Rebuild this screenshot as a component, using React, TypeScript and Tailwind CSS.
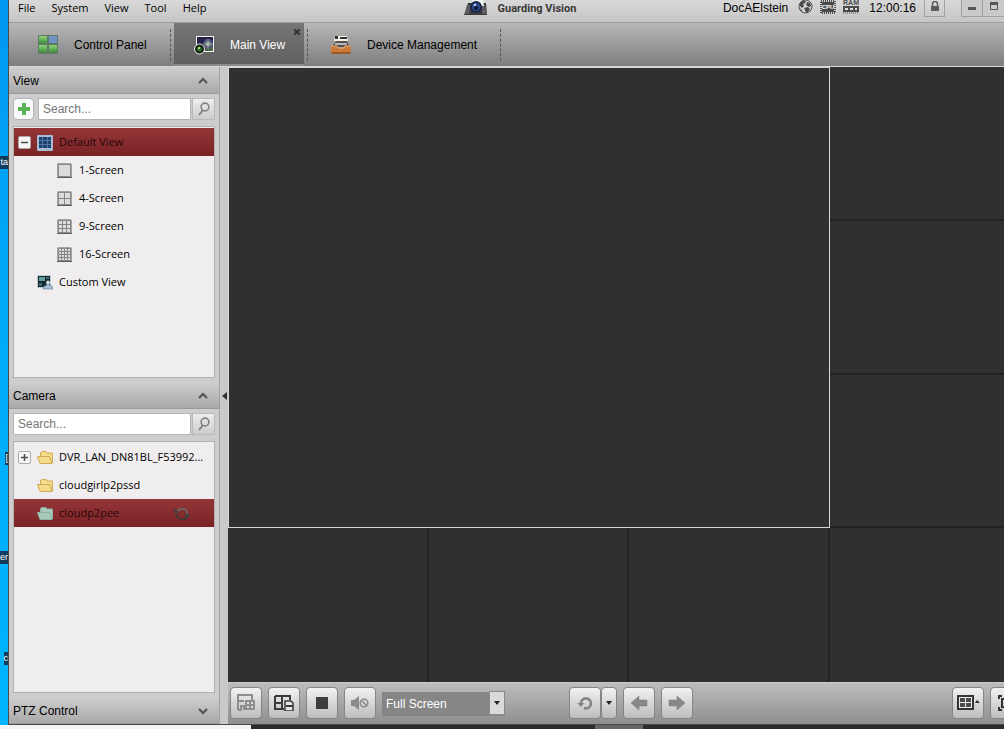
import React, { useState } from 'react';
import { clsx } from 'clsx';

const VIEWS = [
  { label: '1-Screen', cells: 1 },
  { label: '4-Screen', cells: 2 },
  { label: '9-Screen', cells: 3 },
  { label: '16-Screen', cells: 4 },
];

const DESKTOP_LABELS = [
  { text: 'ta', className: 'top-[156px]' },
  { text: '[', className: 'top-[452px]' },
  { text: 'er', className: 'top-[551px]' },
  { text: 'c', className: 'top-[652px]' },
];

/* ---------- Icons ---------- */

function ControlPanelIcon() {
  return (
    <svg width="20" height="20" viewBox="0 0 20 20">
      <defs>
        <linearGradient id="cpGreen" x1="0" y1="0" x2="0" y2="1">
          <stop offset="0" stopColor="#8fd07c" />
          <stop offset="1" stopColor="#43963a" />
        </linearGradient>
      </defs>
      <rect x="0" y="0" width="20" height="19" rx="1" fill="#5f7a62" />
      <rect x="1" y="1" width="8" height="7" fill="url(#cpGreen)" />
      <rect x="11" y="1" width="8" height="7" fill="#6f93c4" />
      <rect x="1" y="10" width="8" height="7" fill="url(#cpGreen)" />
      <rect x="11" y="10" width="8" height="7" fill="url(#cpGreen)" />
    </svg>
  );
}

function MainViewIcon() {
  return (
    <svg width="20" height="20" viewBox="0 0 20 20">
      <rect x="2.5" y="1.5" width="17" height="15" fill="#26214a" stroke="#f4f4f4" />
      <path d="M8 16L19 10v6z" fill="#4c6742" />
      <circle cx="14" cy="9" r="5" fill="#55567c" />
      <circle cx="14" cy="9" r="2.500" fill="#85a07c" />
      <path d="M10 9h9M14 4v10" stroke="#cfd6dd" strokeWidth=".5" />
      <circle cx="5.500" cy="14" r="5" fill="#15200f" stroke="#f4f4f4" />
      <circle cx="5.500" cy="14" r="2.600" fill="#2f6428" />
      <circle cx="5" cy="13" r="1.200" fill="#a6dd78" />
    </svg>
  );
}

function DeviceIcon() {
  return (
    <svg width="20" height="20" viewBox="0 0 20 20">
      <path d="M4 1h12l1 5H3z" fill="#f4f1ea" />
      <path d="M4 1h3v3H4zM9 2h7v2H9z" fill="#333" />
      <path d="M5 6h11l3 6H1z" fill="#57504b" />
      <path d="M4 8h12v2H4z" fill="#b6b7b8" />
      <path d="M0 11h6l1 2h6l1-2h6v6l-1 2H1l-1-2z" fill="#c9793a" />
      <path d="M0 11h6l1 2h6l1-2h6" fill="none" stroke="#eeae72" />
      <path d="M0 17h20l-1 2H1z" fill="#9b5622" />
    </svg>
  );
}

function LogoIcon() {
  return (
    <svg width="24" height="16" viewBox="0 0 24 16">
      <path d="M4 3h18l1 12H0z" fill="#3b3b3d" />
      <path d="M3 5h4l-2 9H1zM18 5h3l2 9h-5z" fill="#5c5d60" />
      <path d="M8 0h11l1 6H7z" fill="#f1f1f1" />
      <circle cx="12" cy="7" r="6" fill="#1c2745" />
      <circle cx="12" cy="7" r="4.200" fill="#2b4b93" />
      <circle cx="12" cy="8" r="2.200" fill="#101a38" />
      <circle cx="11" cy="5" r="1.300" fill="#b8d1fa" />
    </svg>
  );
}

function GlobeIcon() {
  return (
    <svg width="15" height="15" viewBox="0 0 15 15">
      <circle cx="7.500" cy="6.500" r="6.500" fill="#d2d2d2" stroke="#4b4b4b" />
      <path d="M2 3l3-2h3L7 3 5 4l1 2-2 2-2-2zM9 2l3 1 1 3-2 1-3-2zM6 8l4-1 2 2-2 3-2 1-1-3zM2 8l2 2v2z" fill="#4b4b4b" />
    </svg>
  );
}

function CpuIcon() {
  return (
    <svg width="16" height="14" viewBox="0 0 16 14">
      <rect x="1" y="1" width="14" height="12" fill="none" stroke="#4b4b4b" strokeWidth="2" strokeDasharray="1 1" />
      <rect x="2" y="2" width="12" height="10" fill="#4b4b4b" />
      <text x="8" y="9" fontSize="6" fontWeight="700" textAnchor="middle" fill="#fff">CPU</text>
    </svg>
  );
}

function RamIcon() {
  return (
    <svg width="16" height="14" viewBox="0 0 16 14">
      <text x="8" y="5" fontSize="7" fontWeight="700" textAnchor="middle" fill="#4b4b4b">RAM</text>
      <rect x="0" y="6" width="16" height="6" fill="#4b4b4b" />
      <path d="M2 8h3v2H2zM7 8h3v2H7zM12 8h2v2h-2z" fill="#dedede" />
      <path d="M0 13h16" stroke="#4b4b4b" strokeDasharray="1 1" />
    </svg>
  );
}

function LockIcon() {
  return (
    <svg width="10" height="11" viewBox="0 0 10 11">
      <path d="M2.500 5V3a2.500 2.500 0 015 0v2" fill="none" stroke="#5b5b5b" strokeWidth="1.500" />
      <rect x="1" y="5" width="8" height="5" fill="#5b5b5b" />
    </svg>
  );
}

function Chevron({ down = false }: { down?: boolean }) {
  return (
    <svg width="10" height="8" viewBox="0 0 10 8">
      <path d={down ? 'M1 2l4 4 4-4' : 'M1 6l4-4 4 4'} fill="none" stroke="#555" strokeWidth="2.200" />
    </svg>
  );
}

function SearchIcon() {
  return (
    <svg width="12" height="14" viewBox="0 0 12 14">
      <circle cx="7" cy="5" r="3.900" fill="none" stroke="#828282" strokeWidth="1.600" />
      <path d="M5 8l-4 5" stroke="#828282" strokeWidth="2" />
    </svg>
  );
}

function DefaultViewIcon() {
  return (
    <svg width="16" height="16" viewBox="0 0 16 16">
      <rect width="16" height="16" rx="1" fill="#a9bcd3" />
      <rect x="2" y="2" width="12" height="11" fill="#1f4270" />
      <path d="M2 5.500h12M2 9.500h12M5.500 2v11M10.500 2v11" stroke="#4f78a8" />
    </svg>
  );
}

function ScreenIcon({ cells }: { cells: number }) {
  const step = 11 / cells;
  const lines = Array.from({ length: cells - 1 }, (_, i) => Math.floor((i + 1) * step) + 2.5);
  return (
    <svg width="15" height="15" viewBox="0 0 15 15">
      <rect x="0.500" y="0.500" width="14" height="14" rx="1" fill="#8a8a8a" stroke="#a2a2a2" />
      <path d="M0 14.500h15" stroke="#5d5d5d" />
      <rect x="2" y="2" width="11" height="11" fill="#dcdcdc" />
      {lines.map((p) => (
        <path key={p} d={`M${p} 2v11M2 ${p}h11`} stroke="#858585" />
      ))}
    </svg>
  );
}

function CustomViewIcon() {
  return (
    <svg width="16" height="15" viewBox="0 0 16 15">
      <rect width="14" height="13" fill="#c3cbd2" />
      <rect x="1" y="1" width="12" height="11" fill="#17262c" />
      <rect x="2" y="2" width="6" height="4" fill="#5fa09f" />
      <path d="M9 2h3v2H9zM2 8h3v3H2z" fill="#3c6a78" />
      <path d="M6 14c0-3 2-3 4-4V8h2v2c3 1 4 1 4 4z" fill="#a5bfd9" stroke="#5e7894" strokeWidth=".6" />
      <circle cx="11" cy="7.500" r="2" fill="#c9d8e6" />
    </svg>
  );
}

function FolderIcon({ online = false }: { online?: boolean }) {
  const fill = online ? '#a9c9ba' : '#f4dc8b';
  const edge = online ? '#8fb3a2' : '#cfa953';
  return (
    <svg width="16" height="13" viewBox="0 0 16 13">
      <path d="M3.500 11V1.500L5 .5h4l1 1.500h5.500V12" fill={fill} stroke={edge} />
      <path d="M.5 5.500h12l2.500 7H3z" fill={fill} stroke={edge} />
    </svg>
  );
}

function RefreshIcon({ className }: { className?: string }) {
  return (
    <svg width="16" height="16" viewBox="0 0 16 16" className={className}>
      <path d="M4 9a5 5 0 1 1 3 4" fill="none" stroke="currentColor" strokeWidth="2.600" />
      <path d="M0 8h7.500L4 12z" fill="currentColor" />
    </svg>
  );
}

/* Two-arrow reload shown on the selected device */
function ReloadIcon() {
  return (
    <svg width="16" height="14" viewBox="0 0 16 14" className="mr-6 ml-auto">
      <path d="M3 5a5.500 5.500 0 0 1 10.500 2" fill="none" stroke="#6e6260" strokeWidth="2" />
      <path d="M13 9A5.500 5.500 0 0 1 2.500 7" fill="none" stroke="#453634" strokeWidth="2" />
      <path d="M0 1l6 5H0zM16 7h-6l4 5z" fill="#4c3e3c" />
    </svg>
  );
}

function SaveLayoutIcon() {
  return (
    <svg width="18" height="17" viewBox="0 0 18 17">
      <path d="M1 16V1h14v5M1 7h6M7 16v-4H4v4H1" fill="none" stroke="#8d8d8d" strokeWidth="2" />
      <rect x="8" y="6" width="10" height="10" fill="#8d8d8d" />
      <path d="M10 8h2v2h-2zM14 8h2v2h-2zM10 12h2v2h-2zM14 12h2v2h-2z" fill="#ddd" />
    </svg>
  );
}

function SaveAsIcon() {
  return (
    <svg width="20" height="16" viewBox="0 0 20 16">
      <path d="M1 1h15v4M1 1v13h9M8 1v13M1 8h8" fill="none" stroke="#3b3b3b" strokeWidth="2" />
      <path d="M11 6h6l2 2v8h-8z" fill="#e4e4e4" stroke="#3b3b3b" strokeWidth="1.500" />
      <path d="M12 11h7" stroke="#3b3b3b" strokeWidth="2" />
    </svg>
  );
}

function MuteIcon() {
  return (
    <svg width="18" height="14" viewBox="0 0 18 14">
      <path d="M0 4h3l5-4v14l-5-4H0z" fill="#8b8b8b" />
      <circle cx="13" cy="7" r="3.800" fill="none" stroke="#8b8b8b" strokeWidth="1.500" />
      <path d="M10.500 4.500l5 5" stroke="#8b8b8b" strokeWidth="1.500" />
    </svg>
  );
}

function ArrowIcon({ right = false }: { right?: boolean }) {
  return (
    <svg width="18" height="14" viewBox="0 0 18 14">
      <path
        d={right ? 'M1 4h8V0l8 7-8 7v-4H1z' : 'M17 4H9V0L1 7l8 7v-4h8z'}
        fill="#888"
        stroke="#7a7a7a"
        strokeWidth=".5"
      />
    </svg>
  );
}

function WindowDivisionIcon() {
  return (
    <svg width="23" height="16" viewBox="0 0 23 16">
      <rect x="1" y="1" width="15" height="13" fill="#eee" stroke="#333" strokeWidth="2" />
      <path d="M3 3h5v4H3zM9 3h5v4H9zM3 8h5v4H3zM9 8h5v4H9z" fill="#4a4a4a" />
      <path d="M18 8l2-3 3 3z" fill="#333" />
    </svg>
  );
}

/* ---------- Building blocks ---------- */

function PanelHeader({ title, down }: { title: string; down?: boolean }) {
  return (
    <button className="flex h-[27px] w-full shrink-0 items-center justify-between border-b border-[#999] bg-linear-to-b from-[#cfcfcf] to-[#a9a9a9] pt-0.5 pr-[11px] pl-1 text-xs text-black">
      {title}
      <Chevron down={down} />
    </button>
  );
}

function SearchRow({ label, withAdd }: { label: string; withAdd?: boolean }) {
  return (
    <div className="mt-1 flex h-[22px] shrink-0 pr-1 pl-1">
      {withAdd && (
        <button aria-label="Add view" className="mr-1 flex w-[21px] items-center justify-center rounded-sm border border-[#b4b4b4] bg-[#fafafa]">
          <svg width="12" height="12" viewBox="0 0 12 12">
            <path d="M4 0h4v4h4v4H8v4H4V8H0V4h4z" fill="#5db555" />
          </svg>
        </button>
      )}
      <input
        type="text"
        aria-label={label}
        placeholder="Search..."
        className="min-w-0 flex-1 border border-[#b4b4b4] bg-white px-1 text-xs text-black outline-none placeholder:text-[#757575]"
      />
      <button aria-label="Search" className="ml-px flex w-[23px] items-center justify-center border border-[#b9b9b9] bg-linear-to-b from-[#eee] to-[#ccc]">
        <SearchIcon />
      </button>
    </div>
  );
}

function Expander({ open }: { open?: boolean }) {
  return (
    <span className="flex size-[13px] items-center justify-center rounded-xs border border-[#b0a8a8] bg-[#f6f6f6]">
      <svg width="7" height="7" viewBox="0 0 7 7">
        <path d={open ? 'M0 3.500h7' : 'M0 3.500h7M3.500 0v7'} stroke="#4d4d4d" strokeWidth="1.500" />
      </svg>
    </span>
  );
}

type TreeRowProps = {
  icon: React.ReactNode;
  label: string;
  expander?: 'open' | 'closed';
  nested?: boolean;
  selected?: boolean;
  onClick?: () => void;
  children?: React.ReactNode;
};

function TreeRow({ icon, label, expander, nested, selected, onClick, children }: TreeRowProps) {
  return (
    <li>
      <button
        onClick={onClick}
        className={clsx(
          "flex h-7 w-full items-center pt-px pl-1 text-left font-['Open_Sans','Noto_Sans',sans-serif] text-[11px] whitespace-nowrap",
          selected ? 'bg-linear-to-b from-[#943638] to-[#7a2225] text-[#260808]' : 'text-black'
        )}
      >
        <span className={clsx('flex shrink-0', nested ? 'w-[39px]' : 'w-[19px]')}>
          {expander && <Expander open={expander === 'open'} />}
        </span>
        <span className="flex w-[22px] shrink-0">{icon}</span>
        {label}
        {children}
      </button>
    </li>
  );
}

function Tree({ children }: { children: React.ReactNode }) {
  return (
    <ul className="mx-1 mt-1.5 mb-1 min-h-0 flex-1 overflow-hidden border border-[#b0b0b0] bg-[#efeded] pt-px">{children}</ul>
  );
}

function BarButton({ label, className, children }: { label: string; className?: string; children: React.ReactNode }) {
  return (
    <button
      aria-label={label}
      className={clsx(
        'flex h-8 shrink-0 items-center justify-center rounded-sm border border-[#858585] bg-linear-to-b from-[#f2f2f2] to-[#bdbdbd]',
        className ?? 'w-8'
      )}
    >
      {children}
    </button>
  );
}

function TabSeparator() {
  return <div className="h-8 border-l border-dashed border-[#555]" />;
}

/* ---------- Page ---------- */

export default function App() {
  const [view, setView] = useState('Default View');
  const [camera, setCamera] = useState('cloudp2pee');

  return (
    <div className="flex h-screen flex-col overflow-hidden bg-[#2c2c2e] font-['Liberation_Sans',Arial,sans-serif] text-black">
      <div className="flex min-h-0 flex-1">
        {/* Strip of desktop left of the window */}
        <div className="relative w-2 shrink-0 overflow-hidden bg-linear-to-b from-[#0098f0] via-[#00adfa] to-[#00b4ff]">
          {DESKTOP_LABELS.map((l) => (
            <span key={l.text} className={clsx('absolute right-0 bg-[#123c5c] text-[9px] leading-[13px] text-white', l.className)}>
              {l.text}
            </span>
          ))}
        </div>

        <div className="flex min-w-0 flex-1 flex-col border-b border-l border-[#4a4a4a] bg-[#cbcbcb]">
          {/* Title bar */}
          <header className="grid h-[23px] shrink-0 grid-cols-[455fr_auto_428fr] items-start border-b border-[#9c9c9c] bg-linear-to-b from-[#d8d8d8] to-[#c6c6c6]">
            <nav className="flex gap-4 pl-[9px] font-['Open_Sans','Noto_Sans',sans-serif] text-[11px] leading-4">
              {['File', 'System', 'View', 'Tool', 'Help'].map((m) => (
                <button key={m}>{m}</button>
              ))}
            </nav>
            <h1 className="flex gap-2.5 font-['Roboto','Liberation_Sans',sans-serif] text-[11px] leading-[17px] font-bold text-[#3a3a3a]">
              <LogoIcon />
              Guarding Vision
            </h1>
            <div className="flex items-start justify-end text-xs leading-4">
              <span className="mr-2.5">DocAElstein</span>
              <span className="flex gap-[7px]">
                <GlobeIcon />
                <CpuIcon />
                <RamIcon />
              </span>
              <time className="mr-2 ml-2.5">12:00:16</time>
              <button aria-label="Lock" className="mr-4 flex h-[17px] w-[21px] items-center justify-center border border-t-0 border-[#a0a0a0] pb-1">
                <LockIcon />
              </button>
              <button aria-label="Minimize" className="flex h-[17px] w-[22px] items-center justify-center border border-t-0 border-[#a0a0a0] bg-[#cacaca]">
                <svg width="8" height="3"><rect width="8" height="3" fill="#555" /></svg>
              </button>
              <button aria-label="Maximize" className="flex h-[17px] w-[21px] items-center justify-center border-b border-[#a0a0a0] bg-[#cacaca] pb-1">
                <svg width="8" height="8"><path d="M.5 1.500h7v6h-7z" fill="none" stroke="#555" /><rect width="8" height="3" fill="#555" /></svg>
              </button>
            </div>
          </header>

          {/* Tabs */}
          <div className="flex h-11 shrink-0 items-center border-b border-[#d8d8d8] bg-linear-to-b from-[#b8b8b8] to-[#7e7e7e] text-xs">
            <button className="flex h-full w-[161px] items-center gap-4 pl-[29px]">
              <ControlPanelIcon />
              Control Panel
            </button>
            <TabSeparator />
            <div className="relative mx-[3px] flex h-full w-[130px] border-b-2 border-[#8a8a8a] bg-linear-to-b from-[#757575] to-[#606060] text-white">
              <button className="flex flex-1 items-center gap-4 pt-0.5 pl-5 text-left">
                <MainViewIcon />
                Main View
              </button>
              <button aria-label="Close Main View" className="absolute top-1.5 right-1">
                <svg width="6" height="6" viewBox="0 0 6 6">
                  <path d="M0 0l6 6M6 0L0 6" stroke="#333" strokeWidth="2" />
                </svg>
              </button>
            </div>
            <TabSeparator />
            <button className="flex h-full w-[192px] items-center gap-4 pl-[23px]">
              <DeviceIcon />
              Device Management
            </button>
            <TabSeparator />
          </div>

          <div className="flex min-h-0 flex-1">
            <aside className="flex w-[211px] shrink-0 flex-col border-r border-[#a2a2a2] bg-[#cdcdcd]">
              <section className="flex min-h-0 flex-1 flex-col">
                <PanelHeader title="View" />
                <SearchRow label="Search views" withAdd />
                <Tree>
                  <TreeRow
                    icon={<DefaultViewIcon />}
                    label="Default View"
                    expander="open"
                    selected={view === 'Default View'}
                    onClick={() => setView('Default View')}
                  />
                  {VIEWS.map((v) => (
                    <TreeRow
                      key={v.label}
                      icon={<ScreenIcon cells={v.cells} />}
                      label={v.label}
                      nested
                      selected={view === v.label}
                      onClick={() => setView(v.label)}
                    />
                  ))}
                  <TreeRow
                    icon={<CustomViewIcon />}
                    label="Custom View"
                    selected={view === 'Custom View'}
                    onClick={() => setView('Custom View')}
                  />
                </Tree>
              </section>

              <section className="flex min-h-0 flex-1 flex-col">
                <PanelHeader title="Camera" />
                <SearchRow label="Search cameras" />
                <Tree>
                  <TreeRow icon={<FolderIcon />} label="DVR_LAN_DN81BL_F53992..." expander="closed" />
                  <TreeRow
                    icon={<FolderIcon />}
                    label="cloudgirlp2pssd"
                    selected={camera === 'cloudgirlp2pssd'}
                    onClick={() => setCamera('cloudgirlp2pssd')}
                  />
                  <TreeRow
                    icon={<FolderIcon online />}
                    label="cloudp2pee"
                    selected={camera === 'cloudp2pee'}
                    onClick={() => setCamera('cloudp2pee')}
                  >
                    <ReloadIcon />
                  </TreeRow>
                </Tree>
              </section>

              <PanelHeader title="PTZ Control" down />
            </aside>

            <button aria-label="Collapse sidebar" className="flex w-2 shrink-0 items-center justify-center bg-[#c9c9c9]">
              <svg width="5" height="8" viewBox="0 0 5 8">
                <path d="M5 0v8L0 4z" fill="#2e2e2e" />
              </svg>
            </button>

            <main className="flex min-w-0 flex-1 flex-col">
              {/* Video wall: one 3x3 window plus the edge windows */}
              <div className="grid min-h-0 flex-1 grid-cols-[201fr_201fr_201fr_174fr] grid-rows-4 bg-[#303030]">
                <div className="col-span-3 row-span-3 border border-[#d6d6d6]" />
                {Array.from({ length: 3 }, (_, i) => (
                  <div key={i} className="border-b-2 border-[#222]" />
                ))}
                {Array.from({ length: 3 }, (_, i) => (
                  <div key={i} className="border-r-2 border-[#222]" />
                ))}
                <div />
              </div>

              <div className="flex h-[42px] shrink-0 items-center overflow-hidden border-t border-[#c9c9c9] bg-linear-to-b from-[#bdbdbd] to-[#8f8f8f] pb-0.5 pl-0.5">
                <div className="flex gap-1.5">
                  <BarButton label="Save view"><SaveLayoutIcon /></BarButton>
                  <BarButton label="Save view as"><SaveAsIcon /></BarButton>
                  <BarButton label="Stop live view">
                    <svg width="12" height="12"><rect width="12" height="12" fill="#3e3e3e" /></svg>
                  </BarButton>
                  <BarButton label="Mute"><MuteIcon /></BarButton>
                </div>
                <div className="relative ml-1.5 h-6 w-[123px] shrink-0">
                  <select aria-label="Window scale" className="h-full w-full appearance-none bg-[#868686] px-1 text-xs text-white">
                    <option>Full Screen</option>
                    <option>4:3</option>
                    <option>16:9</option>
                  </select>
                  <span className="pointer-events-none absolute inset-y-0 right-0 flex w-4 items-center justify-center border border-[#8a8a8a] bg-[#dadada]">
                    <svg width="6" height="4" viewBox="0 0 6 4"><path d="M0 0h6L3 4z" fill="#222" /></svg>
                  </span>
                </div>
                <div className="ml-16 flex gap-1.5">
                  <div className="flex">
                    <BarButton label="Auto-switch"><RefreshIcon className="text-[#858585]" /></BarButton>
                    <BarButton label="Auto-switch interval" className="w-4">
                      <svg width="6" height="4" viewBox="0 0 6 4"><path d="M0 0h6L3 4z" fill="#222" /></svg>
                    </BarButton>
                  </div>
                  <BarButton label="Previous page"><ArrowIcon /></BarButton>
                  <BarButton label="Next page"><ArrowIcon right /></BarButton>
                </div>
                <div className="-mr-[18px] ml-auto flex gap-1.5">
                  <BarButton label="Window division"><WindowDivisionIcon /></BarButton>
                  <BarButton label="Full screen">
                    <svg width="16" height="16" viewBox="0 0 16 16">
                      <path d="M4 1H1v3M1 12v3h3M12 1h3v3M15 12v3h-3M4 4h8v8H4z" fill="none" stroke="#333" strokeWidth="2" />
                    </svg>
                  </BarButton>
                </div>
              </div>
            </main>
          </div>
        </div>
      </div>

      {/* Top edge of the taskbar */}
      <footer className="flex h-1 shrink-0">
        <div className="w-1/4 bg-[#f4f4f4]" />
        <div className="flex-1" />
        <div className="w-12 bg-[#666]" />
        <div className="w-[36%]" />
      </footer>
    </div>
  );
}
